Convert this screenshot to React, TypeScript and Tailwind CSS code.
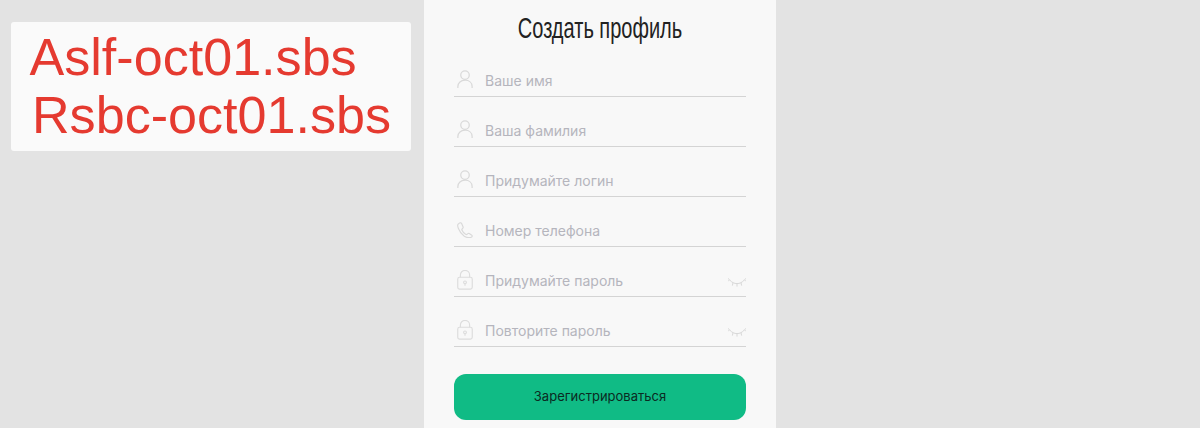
const inter = "font-['Inter','Noto_Sans',sans-serif]";

function UserIcon() {
  return (
    <svg width="16" height="18" viewBox="0 0 18 20" fill="none" stroke="#d9d9d9" strokeWidth="1.4" className="mt-[1px]">
      <circle cx="9" cy="5.6" r="4.8" />
      <path d="M1 20v-1.5C1 14 4.5 11.4 9 11.4s8 2.6 8 7.1V20" />
    </svg>
  );
}

function PhoneIcon() {
  return (
    <svg width="16" height="16" viewBox="0 0 18 18" fill="none" stroke="#d9d9d9" strokeWidth="1.3" strokeLinejoin="round" className="mt-[3px]">
      <path d="M3.2 1 1.4 2.2C.6 2.8.7 5 1.6 7.4c1.1 3 3.4 6.4 6.6 8.6 2.6 1.6 5.2 1.9 7.2 1.4 1.2-.4 1.8-1 1.8-1.6 0-.5-.4-.9-1-1.3l-2.4-1.5c-.6-.3-1.1-.3-1.6.1l-.9.8c-.5.3-1 .3-1.6 0-1.6-1-3.4-3-4.2-4.8-.2-.6-.1-1 .3-1.4l.8-.8c.4-.4.5-.9.3-1.4L5.2 1.8C4.8 1 4 .6 3.2 1Z" />
    </svg>
  );
}

function LockIcon() {
  return (
    <svg width="16" height="20" viewBox="0 0 17 21" fill="none" stroke="#dcdcdc" strokeWidth="1.2" className="mt-[1px]">
      <rect x="0.8" y="7.6" width="15.4" height="12.6" rx="2" />
      <path d="M3.6 7.6V5.2a4.9 4.9 0 0 1 9.8 0v2.4" />
      <circle cx="8.5" cy="13" r="1.5" />
      <path d="M8.5 14.5v2" />
    </svg>
  );
}

function EyeIcon() {
  return (
    <svg width="18" height="9" viewBox="0 0 18 9" fill="none" stroke="#d8d8d8" strokeWidth="1">
      <path d="M1.5 1.8C4 4.6 6.4 5.6 9 5.6s5-1 7.5-3.8" />
      <path d="M1.5 1.8 0 .4M1.5 1.8 0 3.4M5 4.6 4.4 7.6M9 5.6V8.6M13 4.6l.6 3M16.5 1.8 18 .4M16.5 1.8 18 3.4" />
    </svg>
  );
}

function Field({ icon, label, eye }: { icon: React.ReactNode; label: string; eye?: boolean }) {
  return (
    <div className="h-[50px] flex items-end">
      <div className="w-full h-[28px] flex border-b border-[#d4d4d4] relative">
        <div className="w-[31px] flex-none pl-[3px]">{icon}</div>
        <span className={`${inter} text-[14px] leading-[20px] pt-[2px] text-[#b5b5bd]`}>{label}</span>
        {eye && <div className="ml-auto self-end mb-[9px]"><EyeIcon /></div>}
      </div>
    </div>
  );
}

export default function App() {
  return (
    <div className="relative h-[428px] w-[1200px] overflow-hidden bg-[#e3e3e3] flex justify-center">
      <div className="absolute left-[11px] top-[22px] w-[400px] h-[129px] bg-[#fafafa] rounded-[3px] font-['Liberation_Sans',sans-serif] text-[#e53a30] text-[52.1px] leading-[58px] pt-[6px]">
        <div className="pl-[18.5px]">Aslf-oct01.sbs</div>
        <div className="pl-[21px]">Rsbc-oct01.sbs</div>
      </div>
      <div className="w-[352px] bg-[#f8f8f8] px-[30px] flex-none">
        <h1 className="h-[47px] pt-[12px] text-center font-['Liberation_Sans',sans-serif] text-[29px] leading-[32px] text-[#222] font-normal whitespace-nowrap scale-x-[0.69]">
          Создать профиль
        </h1>
        <Field icon={<UserIcon />} label="Ваше имя" />
        <Field icon={<UserIcon />} label="Ваша фамилия" />
        <Field icon={<UserIcon />} label="Придумайте логин" />
        <Field icon={<PhoneIcon />} label="Номер телефона" />
        <Field icon={<LockIcon />} label="Придумайте пароль" eye />
        <Field icon={<LockIcon />} label="Повторите пароль" eye />
        <button className={`${inter} mt-[27px] w-full h-[46px] rounded-[12px] bg-[#10bb85] text-[13px] text-[#0b2a22]`}>
          Зарегистрироваться
        </button>
      </div>
    </div>
  );
}
